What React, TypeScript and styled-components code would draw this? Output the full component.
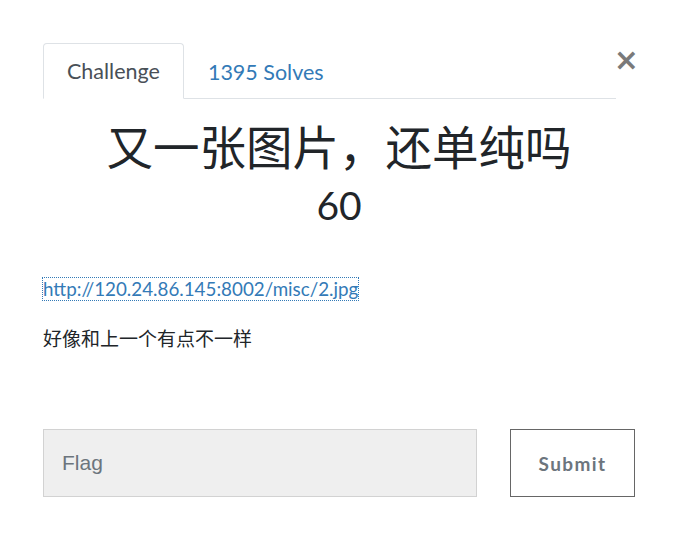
import React from "react";
import styled, { createGlobalStyle } from "styled-components";

const Global = createGlobalStyle`
  html, body { margin: 0; padding: 0; background: #fff; }
  body { font-family: Lato, "Noto Sans CJK SC", sans-serif; color: #212529; }
  * { box-sizing: border-box; }
`;

const Modal = styled.div`
  width: 679px;
  height: 558px;
  padding: 43px 44px 0 43px;
  display: flex;
  flex-direction: column;
`;

const TabBar = styled.div`
  display: flex;
  align-items: flex-end;
  position: relative;
  width: 573px;
  border-bottom: 1px solid #dee2e6;
  height: 56px;
`;

const Tab = styled.div<{ $active?: boolean }>`
  height: 56px;
  margin-bottom: -1px;
  padding: 0 23px;
  display: flex;
  align-items: center;
  font-size: 21.5px;
  font-family: Lato, sans-serif;
  color: ${(p) => (p.$active ? "#495057" : "#337ab7")};
  background: ${(p) => (p.$active ? "#fff" : "transparent")};
  border: 1px solid ${(p) => (p.$active ? "#dee2e6" : "transparent")};
  border-bottom: ${(p) => (p.$active ? "1px solid #fff" : "none")};
  border-radius: 4px 4px 0 0;
`;

const Close = styled.div`
  position: absolute;
  right: -23px;
  top: 2px;
  font-size: 30px;
  font-weight: 700;
  color: #7a7a7a;
  font-family: "DejaVu Sans", sans-serif;
  line-height: 30px;
`;

const Title = styled.h1`
  margin: 18px 0 0;
  text-align: center;
  font-weight: 400;
  font-size: 46.5px;
  line-height: 60px;
  font-family: Lato, "Noto Sans CJK SC", sans-serif;
  color: #212529;
`;

const Value = styled.div`
  margin-top: 5px;
  text-align: center;
  font-size: 39px;
  line-height: 46px;
  font-family: Lato, sans-serif;
  color: #212529;
`;

const Link = styled.a`
  margin-top: 50px;
  align-self: flex-start;
  font-size: 18.8px;
  line-height: 22px;
  color: #337ab7;
  text-decoration: none;
  outline: 1px dotted #337ab7;
  font-family: Lato, sans-serif;
`;

const Desc = styled.p`
  margin: 27px 0 0;
  font-size: 19px;
  line-height: 24px;
  font-family: Lato, "Noto Sans CJK SC", sans-serif;
  color: #212529;
`;

const Form = styled.div`
  margin-top: 78px;
  display: flex;
  gap: 33px;
  width: 592px;
`;

const Input = styled.input`
  width: 434px;
  height: 68px;
  background: #efefef;
  border: 1px solid #d2d2d2;
  padding: 0 18px;
  font-size: 21px;
  font-family: "Liberation Sans", Arial, sans-serif;
  color: #333;
  &::placeholder { color: #6c757d; }
`;

const Button = styled.button`
  width: 125px;
  height: 68px;
  background: #fff;
  border: 1px solid #666;
  font-family: Lato, sans-serif;
  font-weight: 700;
  font-size: 19px;
  letter-spacing: 1.4px;
  color: #6c757d;
`;

export default function App() {
  return (
    <>
      <Global />
      <Modal>
        <TabBar>
          <Tab $active>Challenge</Tab>
          <Tab>1395 Solves</Tab>
          <Close>×</Close>
        </TabBar>
        <Title>又一张图片，还单纯吗</Title>
        <Value>60</Value>
        <Link href="#">http://120.24.86.145:8002/misc/2.jpg</Link>
        <Desc>好像和上一个有点不一样</Desc>
        <Form>
          <Input placeholder="Flag" />
          <Button>Submit</Button>
        </Form>
      </Modal>
    </>
  );
}
